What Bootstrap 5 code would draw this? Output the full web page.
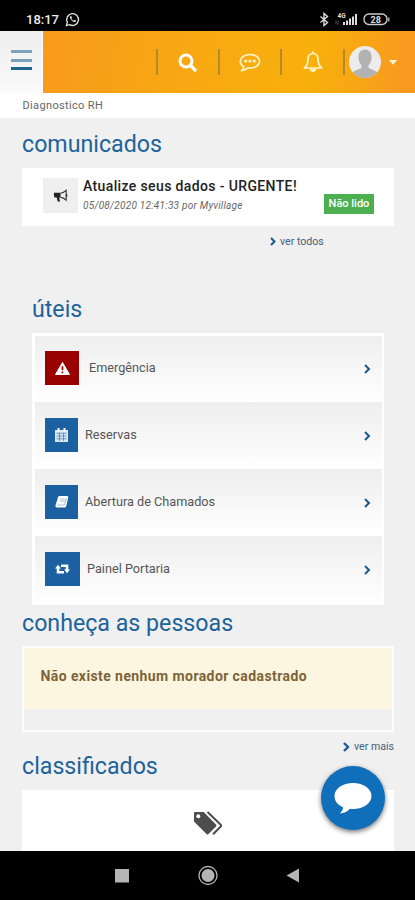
<!DOCTYPE html>
<html lang="pt-BR">
<head>
<meta charset="utf-8">
<meta name="viewport" content="width=device-width, initial-scale=1">
<title>Diagnostico RH</title>
<link href="https://cdn.jsdelivr.net/npm/bootstrap@5.3.0/dist/css/bootstrap.min.css" rel="stylesheet">
<style>
body{font-family:Roboto,"Liberation Sans",sans-serif;background:#f0f0f0;color:#555;font-size:12px}
.phone{width:415px;height:900px}
svg{display:block;flex:none}
.statusbar{height:31px;padding:7px 25px 0 26px;font-size:13px;line-height:26px;font-weight:500;color:#eee}
.statusbar svg{margin-top:5px}
.topbar{height:62px;background:linear-gradient(100deg,#f89a1c 10%,#f8a812 45%,#f8b00c 75%,#f89a20 97%)}
.menu-btn{width:43px;height:62px;background:linear-gradient(#eee,#fafafa);border:0;border-right:1px solid #fff;border-radius:0;padding:2px 10px 0 11px}
.menu-btn i{display:block;height:3px;margin-bottom:5.5px;background:#7ba3bb}
.menu-btn i:last-child{background:#1f668e}
.sep{width:2px;height:26px;background:#b48a2c;flex:none}
.sep-first{margin-left:112.600px}
.slot{width:60.4px;flex:none}
.crumb{height:25px;background:#fff;padding-left:22.500px;font-size:11px;line-height:25px;color:#666;letter-spacing:.35px}
main{padding:10px 21px 0 22px}
h2.title{font-size:23.200px;font-weight:400;line-height:33px;height:31px;color:#20639b;margin:0}
.notice{height:58px;background:#fff;padding:10px 20px 0 21px;margin-top:9px}
.notice-text{margin:-1px 0 0 5px}
.thumb{width:35px;height:35px;background:#efefef}
.notice h3{font-size:14px;line-height:18px;font-weight:500;color:#222;margin:0;white-space:nowrap;letter-spacing:.37px}
.notice p{font-size:10px;line-height:14px;font-style:italic;color:#666;margin:4px 0 0;white-space:nowrap;letter-spacing:.25px}
.unread{background:#4caf50;font-size:11px;font-weight:500;line-height:20px;height:20px;width:50px;padding:0;margin-top:16px}
.more{font-size:10.600px;color:#44617a}
.links{margin:9px 0 3px 10px;width:352px;height:272px;border:solid #fff;border-width:3px 2px 2px 3px}
.links .list-group-item{height:67px;border:0;background:linear-gradient(#eee,#fff);padding:0 11px 2px 10px;color:#555;font-size:12.700px}
.links .list-group-item:first-child{height:66px}
.chev{margin:2px 0 0 auto}
.tile{height:34px;width:33px;background:#1b61a2;flex:none;margin-right:7px}
.tile.red{background:#990000;width:34px;margin-right:10px}
.tile.wide{width:35px}
.people{margin-top:-1px!important}
.panel{height:86px;border:2px solid #fcfcfc;margin-top:8px}
.warn{height:61px;background:#fcf6e1;border:0;border-radius:0;margin:0;padding:0 16.500px;font-size:14px;line-height:57px;font-weight:700;color:#7c6438;white-space:nowrap;letter-spacing:.41px}
.fab{left:320.500px;top:766px;width:64px;height:64px;background:#0f6fba;box-shadow:0 2px 5px rgba(0,0,0,.55)}
.sysnav{height:49px}
</style>
<script src="https://cdn.jsdelivr.net/npm/bootstrap@5.3.0/dist/js/bootstrap.bundle.min.js"></script>
</head>
<body>
<div class="phone position-relative d-flex flex-column overflow-hidden">
  <div class="statusbar bg-black d-flex">
    <span>18:17</span>
    <svg style="margin-left:6px" width="15" height="15" viewBox="0 0 16 16" fill="none" stroke="#ddd" stroke-width="1.500"><path d="M1.500 14.500l1-3.600A6.300 6.300 0 1 1 5 13.500z"/><path d="M5.300 4.500c-1 2 3 6.500 5.400 6.200 1-.2 1.300-1.200 1-1.600L10 8.300l-1 .9c-1-.4-1.800-1.200-2.200-2.200l.8-.9-.8-1.700z" fill="#ddd" stroke="none"/></svg>
    <svg class="ms-auto" width="72" height="15" viewBox="0 0 72 15" fill="none">
      <path d="M2.500 4.500l7 6L6 13.500v-12l3.500 3-7 6" stroke="#ddd" stroke-width="1.400"/>
      <path d="M18 12.500v-4M20 12.500v-4" stroke="#555"/>
      <path d="M26 13v-3M29 13V8.500M32 13V6.500M35 13V4.500M38 13V2" stroke="#ddd" stroke-width="2"/>
      <text x="19.500" y="6" font-size="6.500" font-weight="700" fill="#ddd">4G</text>
      <rect x="46" y="2" width="23" height="10.500" rx="5" stroke="#ccc" stroke-width="1.400"/><path d="M70.800 5.500v4" stroke="#ccc" stroke-width="1.200"/>
      <text x="52.500" y="10.500" font-size="9" font-weight="700" fill="#ddd">28</text>
    </svg>
  </div>

  <header class="topbar d-flex align-items-center">
    <button class="menu-btn btn" aria-label="Menu"><i></i><i></i><i></i></button>
    <span class="sep sep-first"></span>
    <div class="slot d-flex justify-content-center"><svg width="19" height="19" viewBox="0 0 19 19" fill="none" stroke="#fff"><circle cx="8" cy="8" r="6" stroke-width="3"/><path d="M12.500 12.500l4.500 4.500" stroke-width="3.400" stroke-linecap="round"/></svg></div>
    <span class="sep"></span>
    <div class="slot d-flex justify-content-center"><svg width="22" height="19" viewBox="0 0 22 19"><path d="M11 1.500c5.400 0 9.700 3 9.700 6.800S16.400 15 11 15c-.8 0-1.500-.1-2.200-.2-1.600 1.500-3.400 2.300-5.800 2.500 1-1 1.600-2.200 1.700-3.600C2.600 12.500 1.300 10.500 1.300 8.300c0-3.800 4.300-6.800 9.700-6.800z" fill="none" stroke="#fff4d0" stroke-width="1.700"/><g fill="#fff4d0"><circle cx="6.800" cy="8" r="1.600"/><circle cx="11" cy="8" r="1.600"/><circle cx="15.200" cy="8" r="1.600"/></g></svg></div>
    <span class="sep"></span>
    <div class="slot d-flex justify-content-center"><svg width="20" height="22" viewBox="0 0 20 22"><path d="M10 2.500C6.500 2.500 5 5.300 5 8c0 4.800-1.200 7-3.600 9h17.200C16.200 15 15 12.800 15 8c0-2.700-1.500-5.500-5-5.500z" fill="none" stroke="#fff4d0" stroke-width="1.700" stroke-linejoin="round"/><path d="M10 .5v2" stroke="#fff4d0" stroke-width="2"/><path d="M7 18h6c0 1.800-1.200 3-3 3s-3-1.200-3-3z" fill="#fff4d0"/></svg></div>
    <span class="sep"></span>
    <svg class="ms-1" width="32" height="32" viewBox="0 0 32 32"><clipPath id="round"><circle cx="16" cy="16" r="16"/></clipPath><g clip-path="url(#round)"><path fill="#ececec" d="M0 0h32v32H0z"/><path fill="#b2b2b2" d="M16 3.500c4 0 6.500 2.800 6.500 7.500 0 3.800-1.300 6.500-3 8.200v2.300c1.500 2 6.500 2 9 5.500V32h-25v-5c2.500-3.500 7.500-3.500 9-5.500v-2.300c-1.700-1.700-3-4.400-3-8.200 0-4.700 2.500-7.500 6.500-7.500z"/></g></svg>
    <svg class="ms-2" width="8" height="5" viewBox="0 0 8 5"><path fill="#fff3dd" d="M0 0h8L4 4.800z"/></svg>
  </header>
  <div class="crumb">Diagnostico RH</div>

  <main class="flex-grow-1 d-flex flex-column">
    <h2 class="title">comunicados</h2>
    <div class="notice d-flex">
      <div class="thumb d-flex align-items-center justify-content-center"><svg width="16" height="14" viewBox="0 0 17 15"><path d="M1 4h7v5H6.500l1 4.500H5L3.800 9H1.500Q.5 6.500 1 4z" fill="#222"/><path d="M8 4.500c2.500-.3 4.300-1.300 6-3v10.500c-1.700-1.700-3.500-2.800-6-3" fill="none" stroke="#333" stroke-width="1.200"/><path d="M14.500 5.500v3" stroke="#333" stroke-width="1.500"/></svg></div>
      <div class="notice-text">
        <h3>Atualize seus dados - URGENTE!</h3>
        <p>05/08/2020 12:41:33 por Myvillage</p>
      </div>
      <span class="badge unread rounded-0 ms-auto">Não lido</span>
    </div>
    <div class="more d-flex align-items-center" style="height:31px;padding-left:248px"><svg width="6" height="9" viewBox="0 0 6 9" class="me-1"><path d="M1 1l3.500 3.500L1 8" fill="none" stroke="#1d5a96" stroke-width="2"/></svg>ver todos</div>

    <h2 class="title" style="margin:36px 0 0 10px">úteis</h2>
    <div class="links list-group rounded-0">
      <a class="list-group-item d-flex align-items-center"><span class="tile red d-flex align-items-center justify-content-center"><svg width="15" height="13" viewBox="0 0 15 13"><path d="M7.500.5L14.500 12.500H.5z" fill="#fff" stroke="#fff" stroke-linejoin="round"/><path d="M7.500 4.300v4M7.500 9.500v1.700" stroke="#900" stroke-width="1.700"/></svg></span>Emergência<svg class="chev" width="7" height="10" viewBox="0 0 7 10"><path d="M1 1l4 4-4 4" fill="none" stroke="#1d5a8c" stroke-width="2"/></svg></a>
      <a class="list-group-item d-flex align-items-center"><span class="tile d-flex align-items-center justify-content-center"><svg width="13" height="14" viewBox="0 0 13 14"><path d="M0 2h13v12H0z" fill="#dbe9f4"/><path d="M3.500 0v3.500M9.500 0v3.500" stroke="#fff" stroke-width="2"/><path d="M1.500 5.200h10M1.500 8h10M1.500 10.800h10M4.500 5v8M8.500 5v8" stroke="#4b83b3" stroke-width=".8"/></svg></span>Reservas<svg class="chev" width="7" height="10" viewBox="0 0 7 10"><path d="M1 1l4 4-4 4" fill="none" stroke="#1d5a8c" stroke-width="2"/></svg></a>
      <a class="list-group-item d-flex align-items-center"><span class="tile d-flex align-items-center justify-content-center"><svg width="14" height="12" viewBox="0 0 14 12"><path d="M4.500 0H12q1.500 0 1.200 1.500L11.300 10q-.4 1.500-2 1.500H2Q0 11.500.5 9.500L3 1.200Q3.400 0 4.500 0z" fill="#fff"/><path d="M5.500 3h5M5 5h5M2 9h7.500L11.500 2.500" fill="none" stroke="#8fb2d2" stroke-width=".8"/></svg></span>Abertura de Chamados<svg class="chev" width="7" height="10" viewBox="0 0 7 10"><path d="M1 1l4 4-4 4" fill="none" stroke="#1d5a8c" stroke-width="2"/></svg></a>
      <a class="list-group-item d-flex align-items-center"><span class="tile wide d-flex align-items-center justify-content-center"><svg width="15" height="10" viewBox="0 0 15 10"><path d="M3 3.500v4.800h6M6 1.700h6v5" fill="none" stroke="#fff" stroke-width="2.600"/><path d="M0 4.500L3 .7l3 3.800zM9 5.500l3 3.800 3-3.800z" fill="#fff"/></svg></span>Painel Portaria<svg class="chev" width="7" height="10" viewBox="0 0 7 10"><path d="M1 1l4 4-4 4" fill="none" stroke="#1d5a8c" stroke-width="2"/></svg></a>
    </div>

    <h2 class="title people">conheça as pessoas</h2>
    <div class="panel"><div class="alert warn">Não existe nenhum morador cadastrado</div></div>
    <div class="more d-flex align-items-center justify-content-end" style="margin-top:9px;height:12px;line-height:12px"><svg width="7" height="10" viewBox="0 0 7 10" class="me-1"><path d="M1 1l4 4-4 4" fill="none" stroke="#1d5a96" stroke-width="2.400"/></svg>ver mais</div>

    <h2 class="title" style="margin-top:-3px">classificados</h2>
    <div class="bg-white flex-grow-1 d-flex justify-content-center" style="margin-top:9px;padding-top:21px">
      <svg width="30" height="25" viewBox="0 0 30 25"><path d="M1.500 1h9.200L23 13.500q1 1 0 2L15.500 23q-1 1-2 0L1 10.500V1.500z" fill="#4d4d4d"/><circle cx="5.300" cy="5.300" r="2" fill="#fff"/><path d="M14.500 1L27.500 13.500q1.200 1 0 2.200L20 23.300" fill="none" stroke="#4d4d4d" stroke-width="2"/></svg>
    </div>
  </main>

  <nav class="sysnav bg-black d-flex align-items-center">
    <svg width="415" height="49" viewBox="0 0 415 49"><path fill="#b5b5b5" d="M115 18h14v13.500h-14zM299 17.500v14l-12.500-7z"/><circle cx="208" cy="24.500" r="9" fill="none" stroke="#b5b5b5" stroke-width="1.300"/><circle cx="208" cy="24.500" r="6.500" fill="#b5b5b5"/></svg>
  </nav>

  <a class="fab position-absolute rounded-circle d-flex align-items-center justify-content-center" aria-label="Chat"><svg width="38" height="32" viewBox="0 0 38 32"><path fill="#fff" d="M19 1c10.500 0 18.500 5.800 18.500 13S29.500 27 19 27c-1 0-2 0-3-.2-3 3.200-6 4.400-10.500 4.700 2.300-1.600 3.400-3.500 3.500-6.200C3.700 23 .5 19 .5 14 .5 6.800 8.500 1 19 1z"/></svg></a>
</div>
</body>
</html>
